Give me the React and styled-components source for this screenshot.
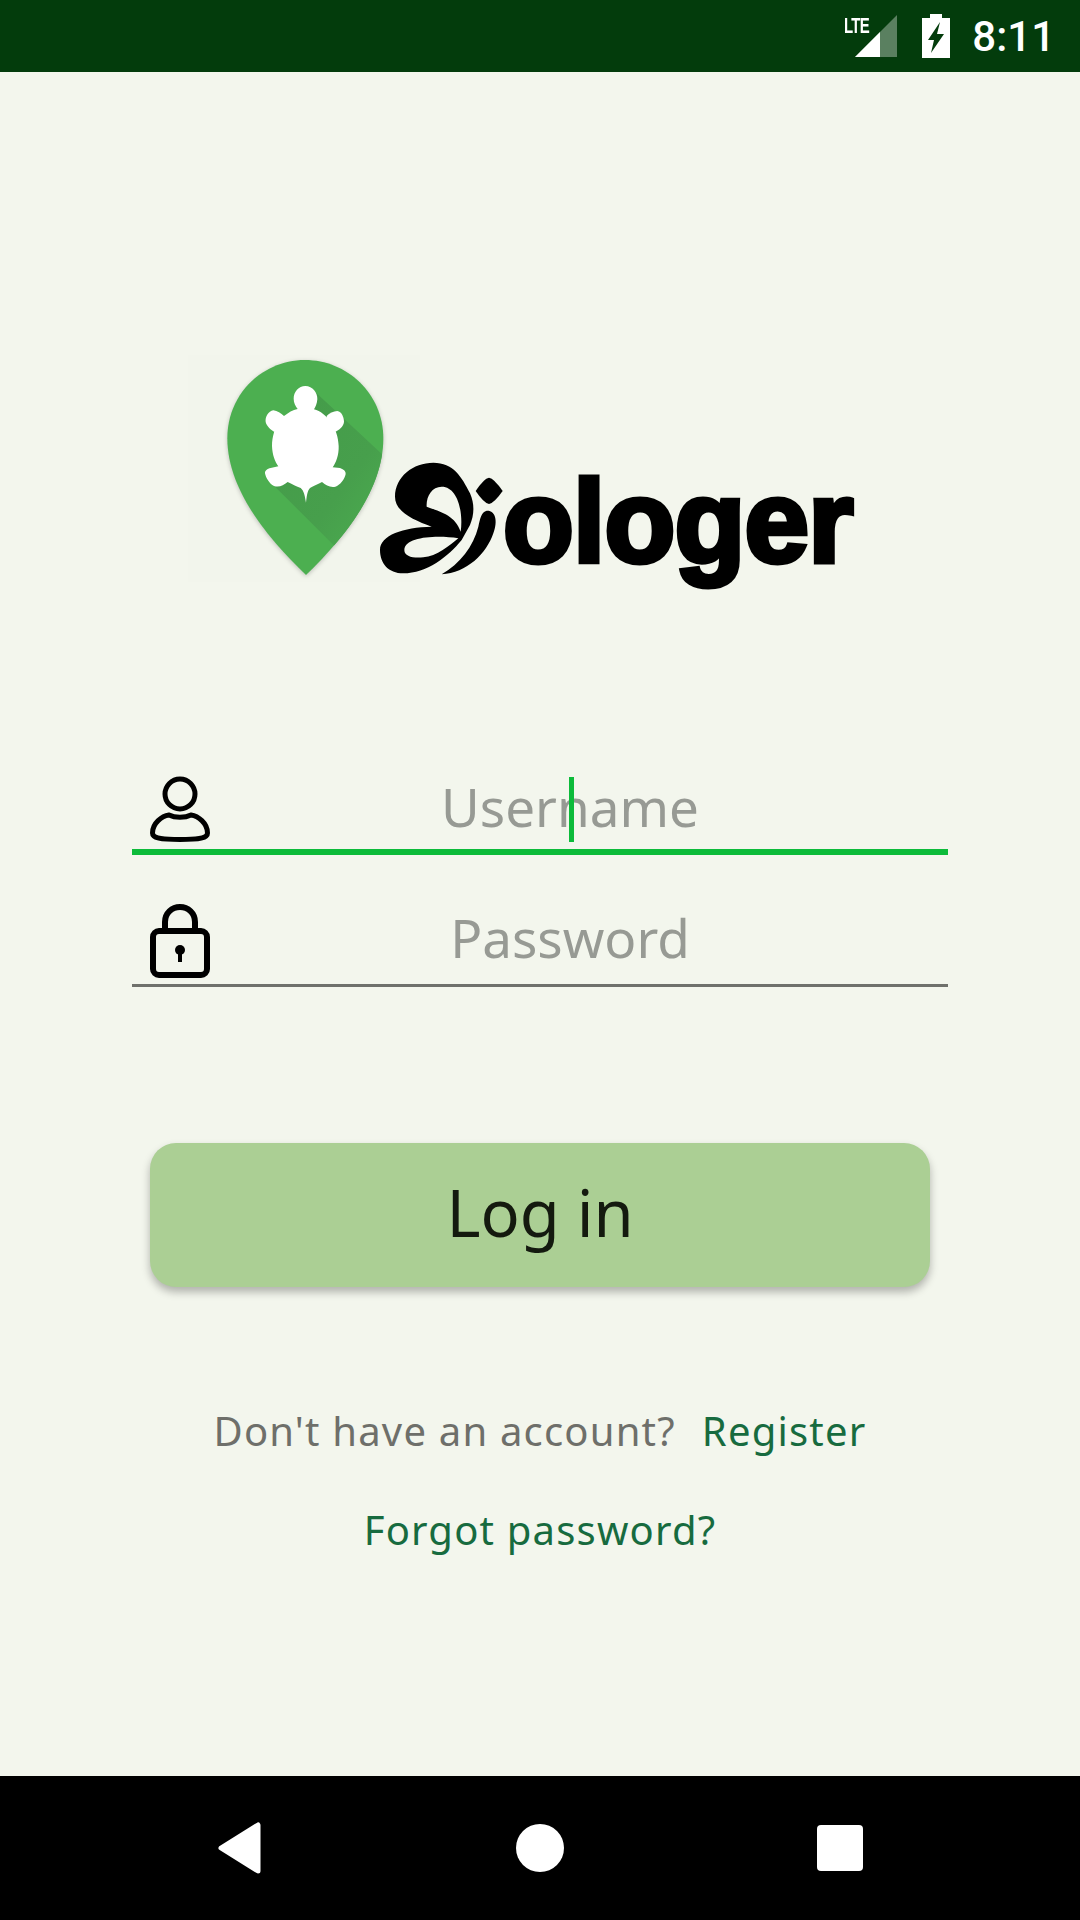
import React from "react";
import styled, { createGlobalStyle } from "styled-components";

const Global = createGlobalStyle`
  html, body { margin: 0; padding: 0; }
  body { font-family: "Noto Sans", "Open Sans", sans-serif; background: #f3f6ed; }
`;

const Screen = styled.div`
  width: 1080px;
  height: 1920px;
  display: flex;
  flex-direction: column;
  background: #f3f6ed;
  overflow: hidden;
`;

const StatusBar = styled.div`
  height: 72px;
  flex: none;
  background: #033c0c;
  display: flex;
  justify-content: flex-end;
  align-items: center;
  padding-right: 25px;
  box-sizing: border-box;
`;

const SignalWrap = styled.div`
  width: 54px;
  height: 42px;
  position: relative;
  margin-right: 25px;
`;

const Lte = styled.span`
  position: absolute;
  left: 1px;
  top: 1px;
  font-family: "Liberation Sans", sans-serif;
  font-size: 22px;
  line-height: 20px;
  font-weight: 700;
  letter-spacing: -1px;
  color: #fff;
  transform: scaleX(0.68);
  transform-origin: left center;
`;

const Clock = styled.span`
  font-family: Roboto, sans-serif;
  font-size: 42px;
  font-weight: 500;
  color: #fff;
  margin-left: 22px;
`;

const Main = styled.main`
  flex: 1;
  display: flex;
  flex-direction: column;
`;

const LogoRow = styled.div`
  display: flex;
  align-items: flex-start;
  height: 227px;
  margin-top: 283px;
  padding-left: 188px;
`;

const Butterfly = styled.svg`
  width: 135px;
  height: 117px;
  margin: 105px 0 0 -50px;
  flex: none;
`;

const Wordmark = styled.span`
  font-family: "Liberation Sans", sans-serif;
  font-weight: 700;
  font-size: 116px;
  line-height: 130px;
  color: #000;
  -webkit-text-stroke: 5px #000;
  margin: 102px 0 0 -2px;
  letter-spacing: -0.8px;
`;

const Form = styled.form`
  margin-top: 193px;
  padding: 0 132px;
  display: flex;
  flex-direction: column;
`;

const Field = styled.div`
  height: ${(p) => p.$height}px;
  margin-top: ${(p) => p.$top}px;
  box-sizing: border-box;
  display: flex;
  align-items: flex-end;
  padding-left: 18px;
  border-bottom: ${(p) => (p.$active ? "6px solid #0cbb3a" : "3px solid #6f716c")};
`;

const IconSvg = styled.svg`
  width: 60px;
  flex: none;
  margin-bottom: ${(p) => p.$bottom}px;
  display: block;
`;

const Hint = styled.div`
  flex: 1;
  position: relative;
  text-align: center;
  padding-right: 18px;
  align-self: center;
  margin-bottom: ${(p) => p.$lift}px;
  font-size: 53px;
  line-height: 70px;
  color: #979a94;
`;

const Cursor = styled.i`
  position: absolute;
  left: 359px;
  top: 5px;
  width: 5px;
  height: 65px;
  background: #0cbb3a;
`;

const LoginButton = styled.button`
  margin: 156px 18px 0;
  height: 144px;
  border: none;
  border-radius: 26px;
  background: #abcf94;
  box-shadow: 0 5px 8px rgba(0, 0, 0, 0.28);
  font-family: inherit;
  font-size: 65px;
  color: #141a0f;
  padding: 0 0 7px;
`;

const LinkRow = styled.div`
  display: flex;
  justify-content: center;
  gap: ${(p) => p.$gap || 0}px;
  margin-top: ${(p) => p.$top}px;
  font-size: 40px;
  line-height: 54px;
  letter-spacing: 1.2px;
`;

const Muted = styled.span`
  color: #6e6f6a;
`;

const Link = styled.a`
  color: #176b3f;
`;

const NavBar = styled.nav`
  height: 144px;
  flex: none;
  background: #000;
  padding: 0 90px;
  display: grid;
  grid-template-columns: repeat(3, 300px);
  align-items: center;
  justify-items: center;
`;

const PIN = "M408 705C310 610 172 460 172 295C172 160 280 60 405 60C530 60 640 160 640 295C640 460 506 610 408 705Z";

function Pin() {
  return (
    <svg width="232" height="227" viewBox="54 45 696 681" style={{ flex: "none" }}>
      <defs>
        <linearGradient id="long" x1="0" y1="0" x2="1" y2="1">
          <stop offset="0" stopColor="#449b49" />
          <stop offset="0.6" stopColor="#479f4c" />
          <stop offset="1" stopColor="#4caf50" />
        </linearGradient>
        <clipPath id="pinClip">
          <path d={PIN} />
        </clipPath>
      </defs>
      <rect x="54" y="45" width="696" height="681" fill="#f2f5ec" />
      <path d={PIN} fill="#4caf50" style={{ filter: "drop-shadow(0 4px 6px rgba(0,0,0,.22))" }} />
      <g clipPath="url(#pinClip)">
        <path d="M435 155L660 365V480L500 625L315 440L400 300Z" fill="url(#long)" />
      </g>
      <g fill="#fff">
        <path d="M406 138C428 138 443 158 442 178C441 192 436 202 432 208C470 218 505 265 506 318C507 345 498 368 488 382L510 384C522 388 528 395 527 402C524 418 510 436 496 440C480 443 468 436 456 426C445 432 430 438 420 444C412 452 410 470 408 488C405 470 402 452 392 444C380 440 365 432 353 426C340 436 328 443 312 438C298 432 287 412 285 400C284 392 292 386 302 384L325 379C315 365 307 345 306 318C306 290 315 262 327 250L315 276C305 272 290 260 287 246C285 230 295 214 310 211C322 212 333 220 342 228C355 218 368 210 383 207C376 198 371 188 371 176C371 156 386 138 406 138Z" />
        <path d="M470 228C478 220 490 213 502 213C515 215 522 232 522 246C520 260 508 270 494 276L470 250Z" />
      </g>
    </svg>
  );
}

function ButterflyMark() {
  return (
    <Butterfly viewBox="0 60 405 351">
      <path
        fillRule="evenodd"
        d="M190 68C250 68 275 110 300 160C315 195 312 225 300 255L275 300C235 350 170 400 100 400C55 400 30 370 30 330C30 285 100 262 185 260C130 240 75 215 75 170C75 110 130 68 190 68ZM215 140C185 140 168 170 170 200C210 215 255 225 272 275C280 220 265 140 215 140ZM265 295C200 285 105 290 103 330C103 350 130 355 160 352C200 350 240 315 265 295Z"
      />
      <path d="M350 212C375 210 385 240 370 280C350 340 290 400 215 403C270 370 310 320 325 260C330 235 335 215 350 212Z" />
      <path d="M357 113Q372 115 398 153Q372 190 357 192Q342 190 317 153Q342 115 357 113Z" />
    </Butterfly>
  );
}

export default function App() {
  return (
    <Screen>
      <Global />
      <StatusBar>
        <SignalWrap>
          <Lte>LTE</Lte>
          <svg width="54" height="42" viewBox="0 0 54 42" style={{ display: "block" }}>
            <path d="M12 42L54 0V42Z" fill="#fff" fillOpacity="0.35" />
            <path d="M12 42L37 17V42Z" fill="#fff" />
          </svg>
        </SignalWrap>
        <svg width="28" height="44" viewBox="0 0 28 44" style={{ display: "block" }}>
          <path d="M8 0H20V4H28V44H0V4H8Z" fill="#fff" />
          <path d="M18 8L6 26H12L9 39L22 20H15Z" fill="#033c0c" />
        </svg>
        <Clock>8:11</Clock>
      </StatusBar>
      <Main>
        <LogoRow>
          <Pin />
          <ButterflyMark />
          <Wordmark>ologer</Wordmark>
        </LogoRow>
        <Form>
          <Field $height={80} $top={0} $active>
            <IconSvg $bottom={7} height="66" viewBox="0 0 60 66" fill="none" stroke="#000" strokeWidth="5">
              <circle cx="30" cy="18" r="15" />
              <path d="M2.5 57C2.5 47 12 40 19 39C25 42 35 42 41 39C48 40 57.5 47 57.5 57C57.5 62 50 63.5 30 63.5C10 63.5 2.5 62 2.5 57Z" />
            </IconSvg>
            <Hint $lift={10}>
              Username
              <Cursor />
            </Hint>
          </Field>
          <Field $height={82} $top={50}>
            <IconSvg $bottom={6} height="74" viewBox="0 0 60 74" fill="none" stroke="#000" strokeWidth="6">
              <path d="M15 27V18C15 9 22 3 30 3C38 3 45 9 45 18V27" />
              <rect x="3" y="27" width="54" height="44" rx="6" />
              <circle cx="30" cy="46" r="5" fill="#000" stroke="none" />
              <path d="M30 46V58" strokeWidth="4" />
            </IconSvg>
            <Hint $lift={13}>Password</Hint>
          </Field>
          <LoginButton type="button">Log in</LoginButton>
          <LinkRow $top={117} $gap={26}>
            <Muted>Don't have an account?</Muted>
            <Link>Register</Link>
          </LinkRow>
          <LinkRow $top={45}>
            <Link>Forgot password?</Link>
          </LinkRow>
        </Form>
      </Main>
      <NavBar>
        <svg width="46" height="52" viewBox="0 0 46 52">
          <path d="M41 3V49L4 26Z" fill="#fff" stroke="#fff" strokeWidth="5" strokeLinejoin="round" />
        </svg>
        <svg width="48" height="48" viewBox="0 0 48 48">
          <circle cx="24" cy="24" r="24" fill="#fff" />
        </svg>
        <svg width="46" height="46" viewBox="0 0 46 46">
          <rect width="46" height="46" rx="4" fill="#fff" />
        </svg>
      </NavBar>
    </Screen>
  );
}
